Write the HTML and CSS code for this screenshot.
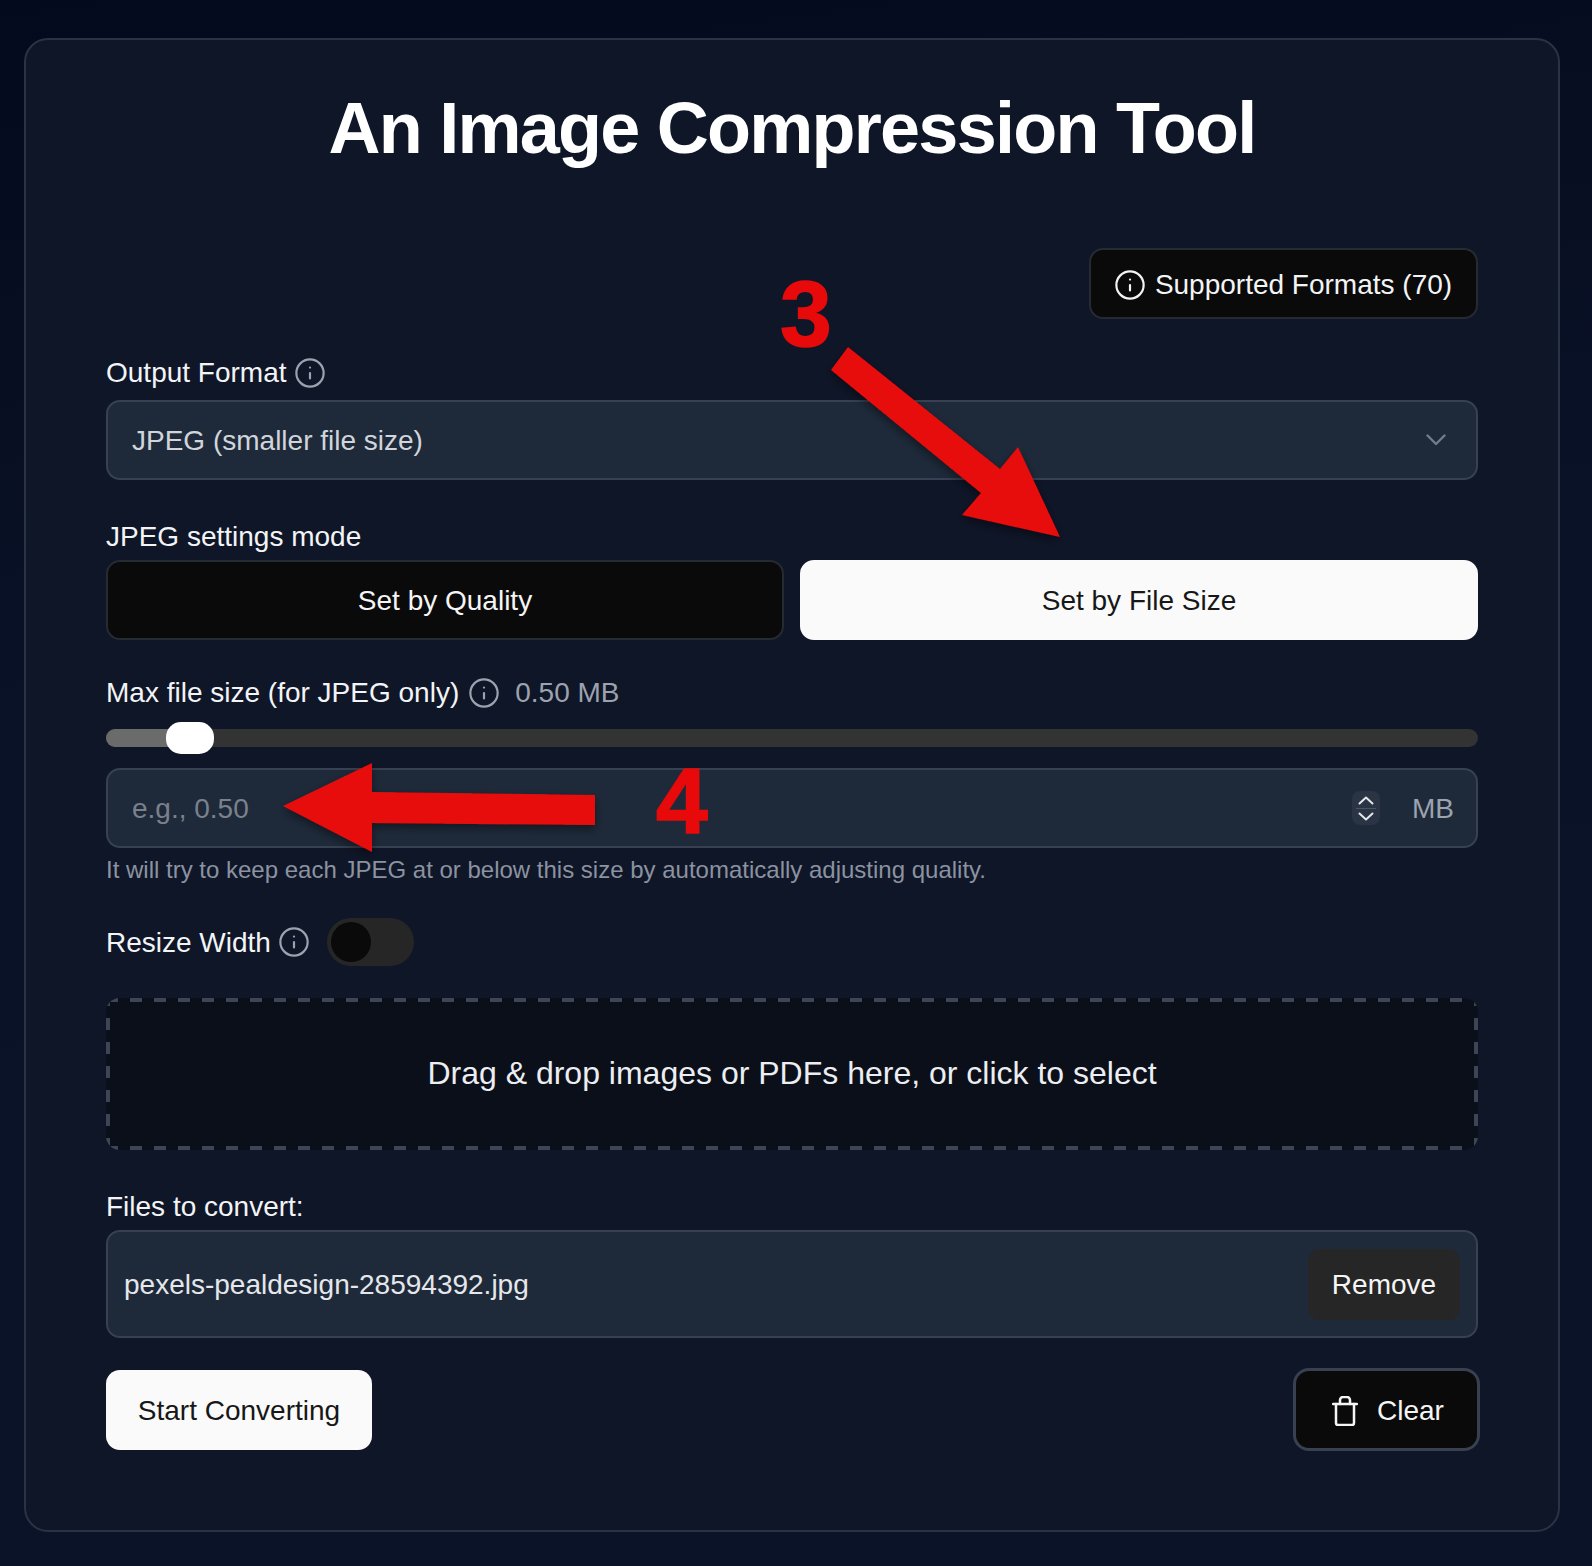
FILE: index.html
```html
<!DOCTYPE html>
<html lang="en">
<head>
  <meta charset="UTF-8">
  <meta name="viewport" content="width=device-width, initial-scale=1.0">
  <title>An Image Compression Tool</title>
  <link rel="stylesheet" href="styles.css">
</head>
<body>
  <main class="card">
    <h1>An Image Compression Tool</h1>

    <div class="formats-row">
      <button class="formats-btn">
        <svg class="icon-info" viewBox="1 1 22 22"><circle cx="12" cy="12" r="10"/><path d="M12 16v-4"/><path d="M12 8h.01"/></svg>
        Supported Formats (70)
      </button>
    </div>

    <label class="label format-label">Output Format
      <svg class="icon-info muted" viewBox="1 1 22 22"><circle cx="12" cy="12" r="10"/><path d="M12 16v-4"/><path d="M12 8h.01"/></svg>
    </label>
    <div class="field">
      <select class="field-control">
        <option>JPEG (smaller file size)</option>
      </select>
      <svg class="chevron" viewBox="0 0 20 12"><path d="M1.5 1.5 10 10l8.500-8.500"/></svg>
    </div>

    <div class="label mode-label">JPEG settings mode</div>
    <div class="mode-buttons">
      <button class="mode-btn">Set by Quality</button>
      <button class="mode-btn active">Set by File Size</button>
    </div>

    <div class="label size-label">Max file size (for JPEG only)
      <svg class="icon-info muted" viewBox="1 1 22 22"><circle cx="12" cy="12" r="10"/><path d="M12 16v-4"/><path d="M12 8h.01"/></svg>
      <span class="size-value">0.50 MB</span>
    </div>
    <div class="slider">
      <div class="slider-fill"></div>
      <div class="slider-thumb"></div>
    </div>
    <div class="field size-field">
      <input class="field-control" type="text" placeholder="e.g., 0.50">
      <div class="spin">
        <svg viewBox="0 0 16 9"><path d="M1.500 7.500 8 1.500l6.500 6"/></svg>
        <div class="spin-line"></div>
        <svg viewBox="0 0 16 9"><path d="M1.500 1.500 8 7.500l6.500-6"/></svg>
      </div>
      <span class="unit">MB</span>
    </div>
    <p class="help">It will try to keep each JPEG at or below this size by automatically adjusting quality.</p>

    <div class="label resize-row">
      <span class="resize-text">Resize Width</span>
      <svg class="icon-info muted" viewBox="1 1 22 22"><circle cx="12" cy="12" r="10"/><path d="M12 16v-4"/><path d="M12 8h.01"/></svg>
      <div class="switch"><div class="switch-knob"></div></div>
    </div>

    <div class="dropzone">Drag &amp; drop images or PDFs here, or click to select</div>

    <div class="label files-label">Files to convert:</div>
    <div class="file-row">
      <span>pexels-pealdesign-28594392.jpg</span>
      <button class="remove-btn">Remove</button>
    </div>

    <div class="actions">
      <button class="start-btn">Start Converting</button>
      <button class="clear-btn">
        <svg class="icon-trash" viewBox="0 0 26 30"><path d="M1 8h24"/><path d="M8 8V4a3 3 0 0 1 3-3h4a3 3 0 0 1 3 3v4"/><path d="M4 8v19a2 2 0 0 0 2 2h14a2 2 0 0 0 2-2V8"/></svg>
        Clear
      </button>
    </div>
  </main>

  <!-- annotations on top of the screenshot -->
  <svg class="marks" viewBox="0 0 1592 1566">
    <defs>
      <filter id="arrow-shadow" x="-20%" y="-20%" width="140%" height="140%">
        <feDropShadow dx="0" dy="4" stdDeviation="5" flood-color="#000" flood-opacity="0.45"/>
      </filter>
    </defs>
    <polygon filter="url(#arrow-shadow)" points="848,347 831,370 981,493 962,515 1060,537 1018,447 1000,469"/>
    <polygon filter="url(#arrow-shadow)" points="283,806 372,763 372,792 595,795 595,825 372,823 372,852"/>
  </svg>
  <span class="mark-num num-3">3</span>
  <span class="mark-num num-4">4</span>
</body>
</html>
```

FILE: styles.css
```css
* {
  box-sizing: border-box;
}

body {
  margin: 0;
  padding: 38px 32px 34px 24px;
  font-family: "Liberation Sans", Arial, sans-serif;
  font-size: 28px;
  color: #f3f4f6;
  background: linear-gradient(172deg, #040a1d 0%, #0a1227 40%, #0a1328 100%);
  position: relative;
  height: 1566px;
  overflow: hidden;
}

button {
  padding: 2px 0 0;
  font-family: inherit;
  font-size: 28px;
  cursor: pointer;
}

.card {
  height: 1494px;
  padding: 48px 80px 0 80px;
  background: #0f1628;
  border: 2px solid #2a3345;
  border-radius: 24px;
}

h1 {
  margin: 0;
  font-size: 72px;
  line-height: 80px;
  letter-spacing: -1.750px;
  font-weight: 700;
  text-align: center;
  color: #fff;
}

.icon-info {
  width: 30px;
  height: 30px;
  fill: none;
  stroke: #f3f4f6;
  stroke-width: 1.6;
  stroke-linecap: round;
  stroke-linejoin: round;
  flex-shrink: 0;
}

.icon-info.muted {
  stroke: #9ca3af;
}

.formats-row {
  margin-top: 80px;
  display: flex;
  justify-content: flex-end;
}

.formats-btn {
  height: 71px;
  width: 389px;
  display: flex;
  align-items: center;
  justify-content: center;
  gap: 10px;
  color: #f3f4f6;
  background: #0a0a0a;
  border: 2px solid #262a33;
  border-radius: 14px;
}

.label {
  display: flex;
  align-items: center;
  gap: 8px;
  line-height: 42px;
}

.format-label {
  margin-top: 33px;
  margin-bottom: 6px;
}

.field {
  height: 80px;
  display: flex;
  align-items: center;
  background: #1e2a3a;
  border: 2px solid #374151;
  border-radius: 14px;
  padding-right: 22px;
  position: relative;
}

.field-control {
  flex: 1;
  min-width: 0;
  height: 100%;
  padding: 0 0 0 24px;
  appearance: none;
  background: transparent;
  border: none;
  outline: none;
  font-family: inherit;
  font-size: 28px;
  color: #d1d5db;
}

input.field-control {
  padding-top: 2px;
}

.field-control::placeholder {
  color: #7a818d;
}

.chevron {
  position: absolute;
  right: 30px;
  top: 32px;
  width: 20px;
  height: 12px;
  fill: none;
  stroke: #747c8a;
  stroke-width: 2.400;
  stroke-linecap: round;
  stroke-linejoin: round;
}

.mode-label {
  margin-top: 36px;
  margin-bottom: 2px;
}

.mode-buttons {
  display: flex;
  gap: 16px;
}

.mode-btn {
  flex: 1;
  height: 80px;
  color: #f5f5f5;
  background: #0a0a0a;
  border: 2px solid #262a33;
  border-radius: 14px;
}

.mode-btn.active {
  color: #171717;
  background: #fafafa;
  border-color: #fafafa;
}

.size-label {
  margin-top: 32px;
  gap: 10px;
}

.size-value {
  margin-left: 6px;
  color: #9ca3af;
}

.slider {
  margin-top: 15px;
  height: 18px;
  background: #333333;
  border-radius: 9px;
  position: relative;
}

.slider-fill {
  width: 80px;
  height: 100%;
  background: #6b6b6b;
  border-radius: 9px 0 0 9px;
}

.slider-thumb {
  position: absolute;
  left: 60px;
  top: -7px;
  width: 48px;
  height: 32px;
  background: #fff;
  border-radius: 15px;
}

.size-field {
  margin-top: 21px;
}

.spin {
  width: 28px;
  height: 34px;
  margin-right: 32px;
  display: flex;
  flex-direction: column;
  align-items: center;
  justify-content: center;
  gap: 3px;
  background: #2a3444;
  border-radius: 8px;
}

.spin svg {
  width: 16px;
  height: 9px;
  fill: none;
  stroke: #e5e7eb;
  stroke-width: 2;
  stroke-linecap: round;
  stroke-linejoin: round;
}

.spin-line {
  width: 20px;
  height: 1px;
  background: #4b5563;
}

.unit {
  padding-top: 2px;
  color: #9ca3af;
}

.help {
  margin: 4px 0 0;
  font-size: 24px;
  line-height: 36px;
  color: #8b92a0;
}

.resize-row {
  margin-top: 30px;
  height: 48px;
}

.resize-text {
  padding-top: 2px;
}

.switch {
  width: 87px;
  height: 48px;
  margin-left: 10px;
  padding: 4px;
  background: #262626;
  border-radius: 24px;
}

.switch-knob {
  width: 40px;
  height: 40px;
  background: #0a0a0a;
  border-radius: 50%;
}

.dropzone {
  margin-top: 32px;
  height: 152px;
  padding-bottom: 2px;
  display: flex;
  align-items: center;
  justify-content: center;
  font-size: 32px;
  color: #eceef1;
  border-radius: 14px;
  background-color: #0b0f1a;
  background-image:
    repeating-linear-gradient(90deg, #3e4655 0 12px, transparent 12px 24px),
    repeating-linear-gradient(90deg, #3e4655 0 12px, transparent 12px 24px),
    repeating-linear-gradient(0deg, #3e4655 0 12px, transparent 12px 24px),
    repeating-linear-gradient(0deg, #3e4655 0 12px, transparent 12px 24px);
  background-size: 100% 4px, 100% 4px, 4px 100%, 4px 100%;
  background-position: 0 0, 0 100%, 0 0, 100% 0;
  background-repeat: no-repeat;
}

.files-label {
  margin-top: 36px;
  margin-bottom: 2px;
}

.file-row {
  height: 108px;
  display: flex;
  align-items: center;
  justify-content: space-between;
  padding: 0 16px;
  color: #e5e7eb;
  background: #1e2a3a;
  border: 2px solid #374151;
  border-radius: 14px;
}

.file-row span {
  padding-top: 2px;
}

.remove-btn {
  width: 152px;
  height: 71px;
  color: #f5f5f5;
  background: #262626;
  border: none;
  border-radius: 12px;
}

.actions {
  margin-top: 30px;
  margin-right: -2px;
  display: flex;
  align-items: center;
  justify-content: space-between;
}

.start-btn {
  width: 266px;
  height: 80px;
  color: #171717;
  background: #fafafa;
  border: none;
  border-radius: 14px;
}

.clear-btn {
  width: 187px;
  height: 83px;
  padding-left: 3px;
  display: flex;
  align-items: center;
  justify-content: center;
  gap: 19px;
  color: #f5f5f5;
  background: #0a0a0a;
  border: 3px solid #374151;
  border-radius: 16px;
}

.icon-trash {
  width: 26px;
  height: 30px;
  fill: none;
  stroke: #f5f5f5;
  stroke-width: 2.500;
  stroke-linecap: round;
  stroke-linejoin: round;
}

.marks {
  position: absolute;
  left: 0;
  top: 0;
  width: 1592px;
  height: 1566px;
  pointer-events: none;
}

.marks polygon {
  fill: #e80a0a;
}

.mark-num {
  position: absolute;
  font-size: 93px;
  line-height: 93px;
  font-weight: 700;
  color: #e80a0a;
  -webkit-text-stroke: 1.500px #e80a0a;
}

.num-3 {
  left: 780px;
  top: 268px;
}

.num-4 {
  left: 656px;
  top: 755px;
}
```
